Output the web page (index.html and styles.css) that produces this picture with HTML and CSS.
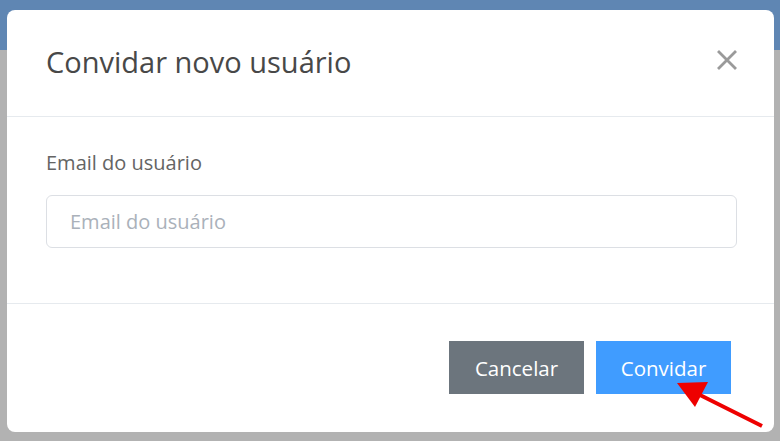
FILE: index.html
```html
<!DOCTYPE html>
<html lang="pt-BR">
<head>
    <meta charset="UTF-8">
    <meta name="viewport" content="width=device-width, initial-scale=1.0">
    <title>Convidar novo usuário</title>
    <link rel="stylesheet" href="styles.css">
</head>
<body>

    <div class="page">
        <div class="topbar"></div>
        <div class="page-content"></div>
    </div>

    <div class="modal">
        <div class="modal-header">
            <h1>Convidar novo usuário</h1>
            <button type="button" class="close" aria-label="Fechar">
                <svg width="20" height="20" viewBox="0 0 20 20">
                    <path d="M2 2 L18 18 M18 2 L2 18" stroke="#9a9a9a" stroke-width="2.8" stroke-linecap="square"/>
                </svg>
            </button>
        </div>
        <div class="modal-body">
            <label for="email">Email do usuário</label>
            <input id="email" type="email" name="email" placeholder="Email do usuário">
        </div>
        <div class="modal-footer">
            <button type="button" class="btn btn-cancel">Cancelar</button>
            <button type="submit" class="btn btn-invite">Convidar</button>
        </div>
    </div>

    <svg class="arrow" width="780" height="441" viewBox="0 0 780 441">
        <line x1="762" y1="426" x2="692" y2="391" stroke="#ee0000" stroke-width="4"/>
        <polygon points="677,383 708,382 695,407" fill="#ee0000"/>
    </svg>

</body>
</html>
```

FILE: styles.css
```css
body {
    font-family: 'Open Sans', 'Lato', sans-serif;
    margin: 0;
    padding: 0;
    width: 780px;
    height: 441px;
    overflow: hidden;
    background-color: #b2b2b2;
}

.page {
    height: 441px;
}

.topbar {
    height: 50px;
    background-color: #5f86b3;
}

.page-content {
    height: 391px;
    background-color: #b2b2b2;
}

/* modal sits over the dimmed page */
.modal {
    position: absolute;
    left: 7px;
    top: 10px;
    width: 767px;
    height: 422px;
    background-color: #ffffff;
    border-radius: 8px;
    display: flex;
    flex-direction: column;
    box-sizing: border-box;
}

.modal-header {
    height: 107px;
    padding: 0 37px 4px 39px;
    display: flex;
    align-items: center;
    justify-content: space-between;
    border-bottom: 1px solid #e6eaee;
    box-sizing: border-box;
}

.modal-header h1 {
    margin: 0;
    font-size: 29px;
    font-weight: 400;
    color: #484848;
}

.close {
    background: none;
    border: none;
    padding: 0;
    margin-bottom: 3px;
    cursor: pointer;
    display: flex;
}

.modal-body {
    height: 187px;
    padding: 32px 37px 0 39px;
    border-bottom: 1px solid #e6eaee;
    box-sizing: border-box;
    display: flex;
    flex-direction: column;
}

.modal-body label {
    font-size: 20px;
    color: #646464;
    margin-bottom: 19px;
}

.modal-body input {
    height: 53px;
    font-size: 20px;
    font-family: inherit;
    border: 1px solid #dcdfe4;
    border-radius: 6px;
    padding: 0 23px;
    box-sizing: border-box;
    outline: none;
}

.modal-body input::placeholder {
    color: #aab1ba;
}

.modal-footer {
    flex: 1;
    display: flex;
    justify-content: flex-end;
    align-items: flex-start;
    padding: 37px 37px 0;
}

.btn {
    font-family: inherit;
    font-size: 20.5px;
    color: #ffffff;
    border: none;
    border-radius: 0;
    width: 135px;
    height: 53px;
    margin: 0 6px;
    cursor: pointer;
}

.btn-cancel {
    background-color: #6c757d;
}

.btn-invite {
    background-color: #409cff;
}

.arrow {
    position: absolute;
    left: 0;
    top: 0;
    pointer-events: none;
}
```
